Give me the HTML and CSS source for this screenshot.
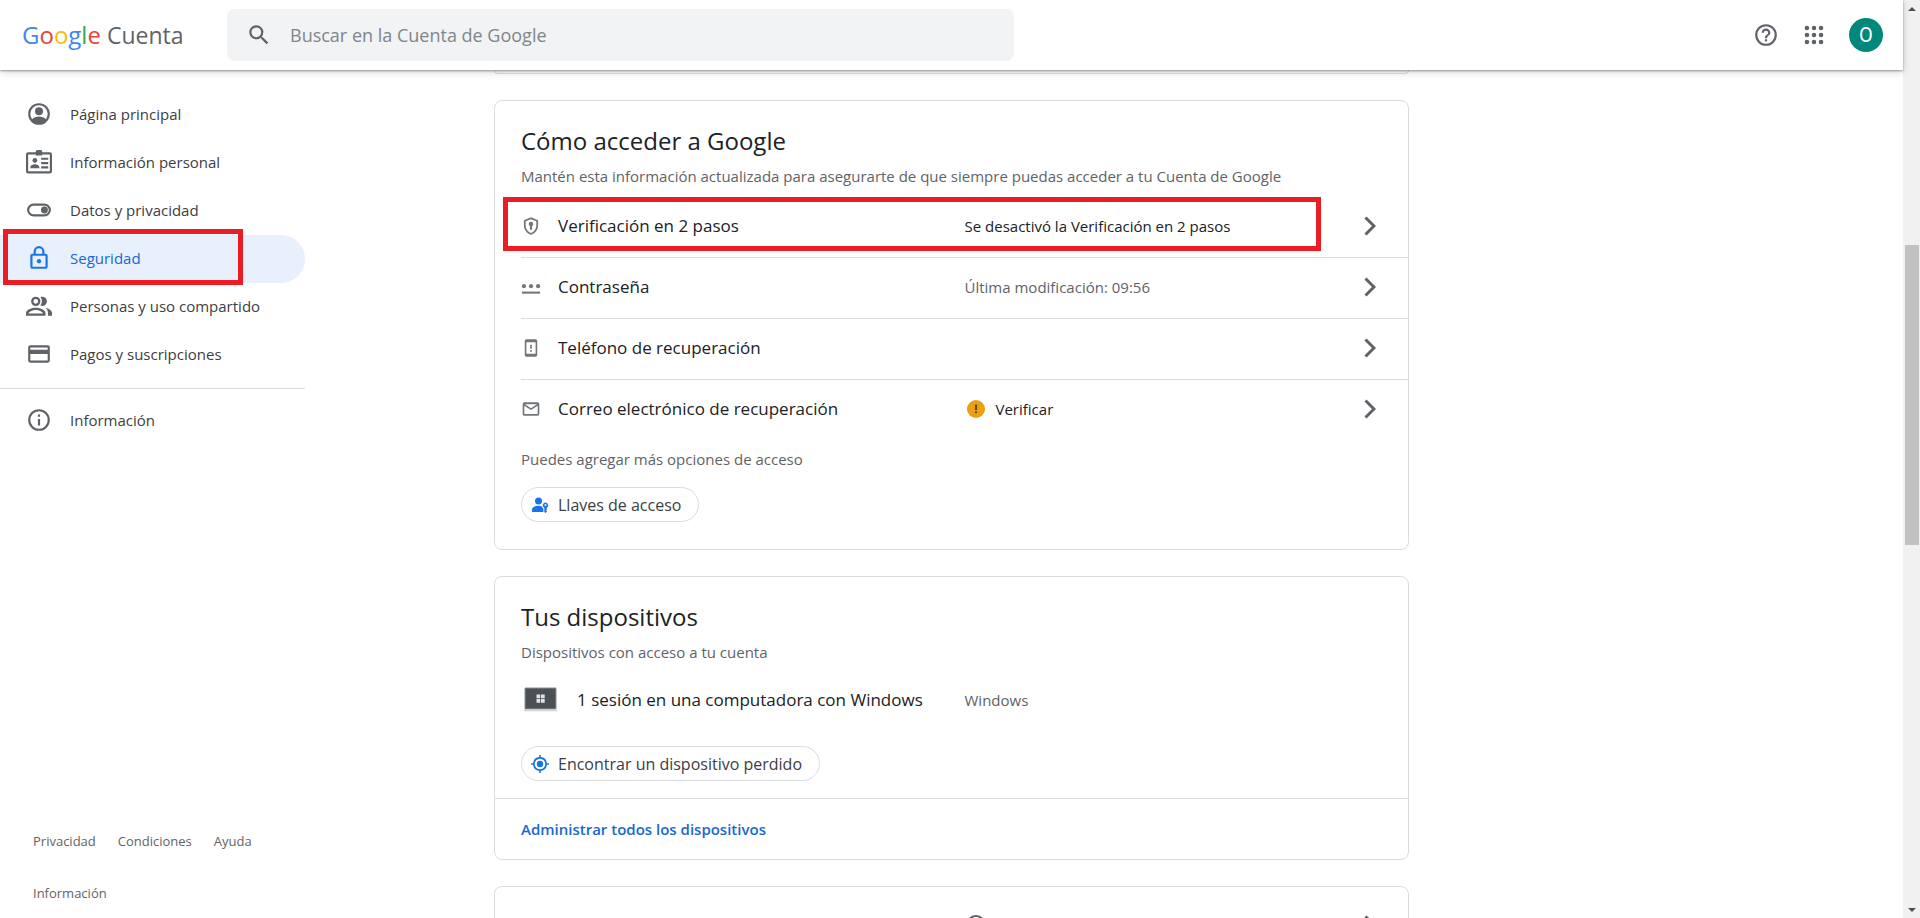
FILE: index.html
```
<!DOCTYPE html>
<html lang="es">
<head>
<meta charset="utf-8">
<title>Cuenta de Google</title>
<link rel="stylesheet" href="styles.css">
</head>
<body>
<div class="window">
  <div class="app">
    <header class="topbar">
      <a class="brand" href="#"><span class="logo"><span class="blue">G</span><span class="red">o</span><span class="yellow">o</span><span class="blue">g</span><span class="green">l</span><span class="red">e</span></span><span class="product">Cuenta</span></a>
      <form class="search" role="search">
        <svg class="search-icon" viewBox="0 0 24 24" aria-hidden="true"><path d="M15.5 14h-.79l-.28-.27A6.47 6.47 0 0 0 16 9.5 6.5 6.5 0 1 0 9.500 16c1.61 0 3.090-.59 4.230-1.570l.27.28v.79l5 4.990L20.490 19l-4.990-5zm-6 0a4.500 4.500 0 1 1 0-9 4.500 4.500 0 0 1 0 9z"/></svg>
        <input type="text" placeholder="Buscar en la Cuenta de Google" aria-label="Buscar en la Cuenta de Google">
      </form>
      <div class="tools">
        <button class="tool" type="button" aria-label="Ayuda"><svg viewBox="0 0 24 24"><path d="M11 18h2v-2h-2v2zm1-16a10 10 0 1 0 0 20 10 10 0 0 0 0-20zm0 18a8 8 0 1 1 0-16 8 8 0 0 1 0 16zm0-14a4 4 0 0 0-4 4h2a2 2 0 1 1 4 0c0 2-3 1.750-3 5h2c0-2.250 3-2.500 3-5a4 4 0 0 0-4-4z"/></svg></button>
        <button class="tool" type="button" aria-label="Aplicaciones"><svg viewBox="0 0 24 24"><circle cx="5.500" cy="5.500" r="2.100"/><circle cx="12" cy="5.500" r="2.100"/><circle cx="18.500" cy="5.500" r="2.100"/><circle cx="5.500" cy="12" r="2.100"/><circle cx="12" cy="12" r="2.100"/><circle cx="18.500" cy="12" r="2.100"/><circle cx="5.500" cy="18.500" r="2.100"/><circle cx="12" cy="18.500" r="2.100"/><circle cx="18.500" cy="18.500" r="2.100"/></svg></button>
        <button class="avatar" type="button">O</button>
      </div>
    </header>

    <div class="content">
      <aside class="sidebar">
        <nav class="nav">
          <a class="nav-item" href="#"><svg viewBox="0 0 24 24"><path d="M12 2a10 10 0 1 0 0 20 10 10 0 0 0 0-20zm-6.400 14.800A8 8 0 1 1 18.400 16.800C16.900 15.100 14.500 14.300 12 14.300s-4.900.8-6.400 2.500z"/><circle cx="12" cy="9.500" r="3.700"/></svg>Página principal</a>
          <a class="nav-item" href="#"><svg viewBox="0 0 24 24"><path d="M22 3h-7V2.500A1.500 1.500 0 0 0 13.500 1h-3A1.500 1.500 0 0 0 9 2.500V3H2a2 2 0 0 0-2 2v15.500a2 2 0 0 0 2 2h20a2 2 0 0 0 2-2V5a2 2 0 0 0-2-2zm0 17.500H2V5h7v1h6V5h7v15.500zM14 8h6.500v2H14zm0 4h6.500v2H14zm0 4h6.500v2H14zM4 17c0-2 2.500-3 4.200-3s4.200 1 4.200 3v.8H4z"/><circle cx="8.200" cy="10.500" r="2.200"/></svg>Información personal</a>
          <a class="nav-item" href="#"><svg viewBox="0 0 24 24"><path d="M17 6H7a6 6 0 0 0 0 12h10a6 6 0 0 0 0-12zm0 10H7a4 4 0 0 1 0-8h10a4 4 0 0 1 0 8z"/><circle cx="17" cy="12" r="3.200"/></svg>Datos y privacidad</a>
          <a class="nav-item active" href="#"><svg viewBox="0 0 24 24"><path d="M18 8h-1V6A5 5 0 0 0 7 6v2H6a2 2 0 0 0-2 2v10a2 2 0 0 0 2 2h12a2 2 0 0 0 2-2V10a2 2 0 0 0-2-2zM9 6a3 3 0 0 1 6 0v2H9V6zm9 14H6V10h12v10z"/><circle cx="12" cy="15" r="2"/></svg>Seguridad<span class="mark mark-nav"></span></a>
          <a class="nav-item" href="#"><svg viewBox="0 0 24 24"><path d="M9 13.500C6 13.500 0 14.800 0 18.500V21h18v-2.500c0-3.700-6-5-9-5zM2.200 19c.4-1.700 4-3.300 6.800-3.300s6.400 1.600 6.800 3.300H2.200zM9 12a4.300 4.300 0 1 0 0-8.600A4.300 4.300 0 0 0 9 12zm0-6.500a2.200 2.200 0 1 1 0 4.400 2.200 2.200 0 0 1 0-4.400zm9 8.300c1.600 1.100 2.300 2.700 2.300 4.700V21H24v-2.500c0-2.700-3.200-4.200-6-4.700zM15 12a4.300 4.300 0 1 0 0-8.600c-.6 0-1.200.1-1.700.4a6.500 6.500 0 0 1 0 7.800c.5.300 1.100.4 1.700.4z"/></svg>Personas y uso compartido</a>
          <a class="nav-item" href="#"><svg viewBox="0 0 24 24"><path d="M20 4H4a2 2 0 0 0-2 2v12a2 2 0 0 0 2 2h16a2 2 0 0 0 2-2V6a2 2 0 0 0-2-2zm0 14H4v-6h16v6zm0-10H4V6h16v2z"/></svg>Pagos y suscripciones</a>
          <hr class="nav-divider">
          <a class="nav-item" href="#"><svg viewBox="0 0 24 24"><path d="M11 7h2v2h-2zm0 4h2v6h-2zm1-9a10 10 0 1 0 0 20 10 10 0 0 0 0-20zm0 18a8 8 0 1 1 0-16 8 8 0 0 1 0 16z"/></svg>Información</a>
        </nav>
        <footer class="legal"><a href="#">Privacidad</a><a href="#">Condiciones</a><a href="#">Ayuda</a><a href="#">Información</a></footer>
      </aside>

      <main class="main">
        <div class="card card-above"></div>

        <section class="card card-access">
          <h2>Cómo acceder a Google</h2>
          <p class="note">Mantén esta información actualizada para asegurarte de que siempre puedas acceder a tu Cuenta de Google</p>
          <div class="rows">
            <a class="row" href="#">
              <span class="label"><svg viewBox="0 0 24 24"><path d="M12 1.500 3.500 5v6.500c0 5.200 3.600 9.800 8.500 11 4.900-1.200 8.500-5.800 8.500-11V5L12 1.500zm6.400 10c0 4-2.700 7.700-6.400 8.900-3.700-1.200-6.400-4.900-6.400-8.900V6.400L12 3.800l6.400 2.600v5.100z"/><circle cx="12" cy="9.500" r="2.700"/><path d="M10.800 10h2.400v6.500h-2.400z"/></svg>Verificación en 2 pasos</span>
              <span class="value dark">Se desactivó la Verificación en 2 pasos</span>
              <svg class="chevron" viewBox="0 0 12 20"><path d="M1.500 1.500 10 10l-8.500 8.500"/></svg>
              <span class="mark mark-row"></span>
            </a>
            <a class="row" href="#">
              <span class="label"><svg viewBox="0 0 24 24"><path d="M1 17.500h22v2.500H1z"/><circle cx="3.500" cy="11" r="2.500"/><circle cx="12" cy="11" r="2.500"/><circle cx="20.500" cy="11" r="2.500"/></svg>Contraseña</span>
              <span class="value">Última modificación: 09:56</span>
              <svg class="chevron" viewBox="0 0 12 20"><path d="M1.500 1.500 10 10l-8.500 8.500"/></svg>
            </a>
            <a class="row" href="#">
              <span class="label"><svg viewBox="0 0 24 24"><path d="M17.500 1.500h-11A2 2 0 0 0 4.500 3.500v17a2 2 0 0 0 2 2h11a2 2 0 0 0 2-2v-17a2 2 0 0 0-2-2zm0 17.500h-11V5h11v14zM11 8h2v5h-2zm0 6.500h2v2h-2z"/></svg>Teléfono de recuperación</span>
              <span class="value"></span>
              <svg class="chevron" viewBox="0 0 12 20"><path d="M1.500 1.500 10 10l-8.500 8.500"/></svg>
            </a>
            <a class="row" href="#">
              <span class="label"><svg viewBox="0 0 24 24"><path d="M20 4H4a2 2 0 0 0-2 2v12a2 2 0 0 0 2 2h16a2 2 0 0 0 2-2V6a2 2 0 0 0-2-2zm-.8 2.200L12 11 4.800 6.200h14.400zM20 18H4V8l8 5.300L20 8v10z"/></svg>Correo electrónico de recuperación</span>
              <span class="value dark"><svg class="warn" viewBox="0 0 20 20"><circle cx="10" cy="10" r="9" fill="#eba00f"/><path d="M9 5.500h2v5.500H9zm0 6.800h2v2H9z" fill="#5f4a1c"/></svg>Verificar</span>
              <svg class="chevron" viewBox="0 0 12 20"><path d="M1.500 1.500 10 10l-8.500 8.500"/></svg>
            </a>
          </div>
          <p class="note">Puedes agregar más opciones de acceso</p>
          <button class="chip" type="button"><svg viewBox="0 0 18 18"><circle cx="7.500" cy="5" r="3.500"/><path d="M1 16v-2.300C1 11 4.500 9.700 7.500 9.700c1.300 0 2.500.2 3.500.7.200 1 .7 1.700 1.400 2.200V16z"/><path fill-rule="evenodd" d="M14.500 6.500a2.800 2.800 0 0 0-1.200 5.300V16l1.200 1 1.600-1.600-1-1.100 1-1.100-.7-1.300a2.800 2.800 0 0 0-.9-5.400zm0 1.500a1 1 0 1 1 0 2 1 1 0 0 1 0-2z"/></svg>Llaves de acceso</button>
        </section>

        <section class="card">
          <div class="card-body">
            <h2>Tus dispositivos</h2>
            <p class="note">Dispositivos con acceso a tu cuenta</p>
            <a class="row device" href="#">
              <span class="label"><svg viewBox="0 0 40 40"><path d="M4 8h31v21H4z" fill="#4b5055"/><path d="M4 8h31v21H4z" fill="none" stroke="#8b9094"/><path d="M15.500 14.500h3.700v3.700h-3.700zm4.500 0h3.700v3.700H20zm-4.500 4.500h3.700v3.700h-3.700zm4.500 0h3.700v3.700H20z" fill="#dfe3e6"/><path d="M3 29.500h33v1.800H3z" fill="#d0d3d6"/></svg>1 sesión en una computadora con Windows</span>
              <span class="value">Windows</span>
            </a>
            <button class="chip" type="button"><svg viewBox="0 0 18 18"><path fill-rule="evenodd" d="M8.200 0h1.600v2.050A7 7 0 0 1 15.950 8.200H18v1.600h-2.050a7 7 0 0 1-6.150 6.150V18H8.200v-2.050A7 7 0 0 1 2.050 9.800H0V8.200h2.050A7 7 0 0 1 8.200 2.050zM9 3.700a5.300 5.300 0 1 0 0 10.600A5.300 5.300 0 0 0 9 3.700z"/><circle cx="9" cy="9" r="3.200"/></svg>Encontrar un dispositivo perdido</button>
          </div>
          <div class="card-foot"><a href="#">Administrar todos los dispositivos</a></div>
        </section>

        <section class="card card-below">
          <a class="row" href="#" aria-label="Más opciones">
            <span class="label"></span>
            <span class="value"><svg class="warn" viewBox="0 0 20 20"><circle cx="10" cy="10" r="9" fill="none" stroke="#5f6368" stroke-width="2"/></svg></span>
            <svg class="chevron" viewBox="0 0 12 20"><path d="M1.500 1.500 10 10l-8.500 8.500"/></svg>
          </a>
        </section>
      </main>
    </div>
  </div>

  <div class="scrollbar" aria-hidden="true">
    <span class="arrow arrow-up"></span>
    <span class="track"><span class="thumb"></span></span>
    <span class="arrow arrow-down"></span>
  </div>
</div>
</body>
</html>
```
FILE: styles.css
```
* { box-sizing: border-box; }

body {
  margin: 0;
  background: #fff;
  color: #202124;
  font-family: "Open Sans", "Liberation Sans", sans-serif;
  font-size: 15px;
  line-height: 24px;
}

a { color: inherit; text-decoration: none; }
button, input { font: inherit; color: inherit; }
button { cursor: pointer; }
h2, p { margin: 0; font-weight: 400; }
svg { display: block; flex: none; fill: currentColor; }

.window { display: flex; height: 100vh; overflow: hidden; }
.app { flex: 1; min-width: 0; display: flex; flex-direction: column; }

/* Top bar */
.topbar {
  position: relative;
  z-index: 1;
  display: flex;
  align-items: center;
  flex: none;
  height: 70px;
  padding: 0 20px 0 22px;
  background: #fff;
  box-shadow: 0 1px 2px rgba(60, 64, 67, .5), 0 2px 8px rgba(60, 64, 67, .2);
}
.brand { display: flex; align-items: baseline; gap: 6px; width: 205px; flex: none; line-height: 32px; }
.logo { font-size: 24px; font-weight: 500; }
.product { font-size: 23px; color: #5f6368; }
.blue { color: #4285f4; }
.red { color: #ea4335; }
.yellow { color: #fbbc05; }
.green { color: #34a853; }

.search {
  display: flex;
  align-items: center;
  gap: 18px;
  flex: 0 1 787px;
  height: 52px;
  padding: 0 19px;
  border-radius: 8px;
  background: #f1f3f4;
}
.search-icon { width: 26px; height: 26px; color: #5f6368; }
.search input { flex: 1; min-width: 0; border: 0; padding: 0; outline: 0; background: transparent; font-size: 18px; }
.search input::placeholder { color: #80868b; opacity: 1; }

.tools { display: flex; align-items: center; gap: 22px; margin-left: auto; }
.tool { display: block; padding: 0; border: 0; background: none; color: #5f6368; }
.tool svg { width: 26px; height: 26px; }
.avatar {
  width: 34px;
  height: 34px;
  padding: 0;
  border: 0;
  border-radius: 50%;
  background: #00897b;
  color: #fff;
  font-family: Roboto, sans-serif;
  font-size: 20px;
}

/* Columns */
.content {
  flex: 1;
  min-height: 0;
  display: grid;
  grid-template-columns: 305px minmax(0, 915px) 305px;
  justify-content: space-between;
  overflow: hidden;
}

.sidebar { display: flex; flex-direction: column; min-height: 0; padding-top: 21px; }
.nav-item {
  position: relative;
  display: flex;
  align-items: center;
  gap: 18px;
  height: 48px;
  padding: 0 0 2px 26px;
  border-radius: 0 24px 24px 0;
  color: #3c4043;
  font-weight: 500;
}
.nav-item svg { width: 26px; height: 26px; color: #5f6368; }
.nav-item.active { background: #e8f0fe; color: #1967d2; }
.nav-item.active svg { color: #1a73e8; }
.nav-divider { margin: 9px 0 8px; border: 0; border-top: 1px solid #dadce0; }

.legal {
  display: flex;
  flex-wrap: wrap;
  gap: 32px 22px;
  margin-top: auto;
  padding: 0 33px 15px;
  color: #5f6368;
  font-size: 13px;
  line-height: 20px;
}

/* Cards */
.main { display: flex; flex-direction: column; gap: 26px; min-height: 0; overflow: hidden; }
.card { flex: none; border: 1px solid #dadce0; border-radius: 8px; background: #fff; }
.card-above { height: 4px; border-top: 0; border-radius: 0 0 8px 8px; }
.card-access { padding: 24px 0 27px 26px; }
.card-body { padding: 24px 0 17px 26px; }
.card-below { padding: 9px 0 40px 26px; }
.card h2 { margin-bottom: 7px; font-size: 24px; line-height: 32px; }
.note { color: #5f6368; }

.rows { margin: 9px 0 7px; }
.row {
  position: relative;
  display: grid;
  grid-template-columns: minmax(0, 1fr) minmax(0, 1fr);
  align-items: center;
  min-height: 60px;
  padding-bottom: 2px;
}
.rows .row + .row { min-height: 61px; border-top: 1px solid #dadce0; }
.label { display: flex; align-items: center; gap: 17px; font-size: 17px; }
.label svg { width: 20px; height: 20px; color: #73777b; }
.value { display: flex; align-items: center; gap: 10px; grid-column: 2; color: #5f6368; }
.value.dark { color: #202124; }
.warn { width: 20px; height: 20px; margin-left: 1px; }
.chevron {
  grid-column: 2;
  grid-row: 1;
  justify-self: end;
  width: 12px;
  height: 20px;
  margin-right: 32px;
  fill: none;
  stroke: #5f6368;
  stroke-width: 3;
}
.value, .label { grid-row: 1; }

.device { margin: 7px 0 15px; }
.device .label { gap: 16px; }
.device .label svg { width: 40px; height: 40px; }

.chip {
  display: inline-flex;
  align-items: center;
  gap: 9px;
  height: 35px;
  padding: 0 17px 0 9px;
  border: 1px solid #dadce0;
  border-radius: 18px;
  background: #fff;
  color: #3c4043;
  font-size: 16px;
  font-weight: 500;
}
.chip svg { width: 18px; height: 18px; color: #1a73e8; }
.card-access .chip { margin-top: 16px; }
.card-foot { padding: 18px 26px; border-top: 1px solid #dadce0; color: #1967d2; font-weight: 600; }

/* Highlight frames laid over an item */
.mark { position: absolute; border: 5px solid #ea1c24; pointer-events: none; }
.mark-nav { inset: -6px 62px -2px 3px; }
.mark-row { inset: 0 87px 6px -18px; }

/* Scrollbar */
.scrollbar { display: flex; flex-direction: column; flex: none; width: 17px; background: #f1f1f1; }
.arrow { display: grid; place-items: center; height: 17px; }
.arrow::before { content: ""; border: 4px solid transparent; }
.arrow-up::before { border-top-width: 0; border-bottom-color: #505050; }
.arrow-down::before { border-bottom-width: 0; border-top-color: #505050; }
.track { flex: 1; padding: 228px 1px 0 2px; }
.thumb { display: block; height: 300px; background: #c1c1c1; }
```
